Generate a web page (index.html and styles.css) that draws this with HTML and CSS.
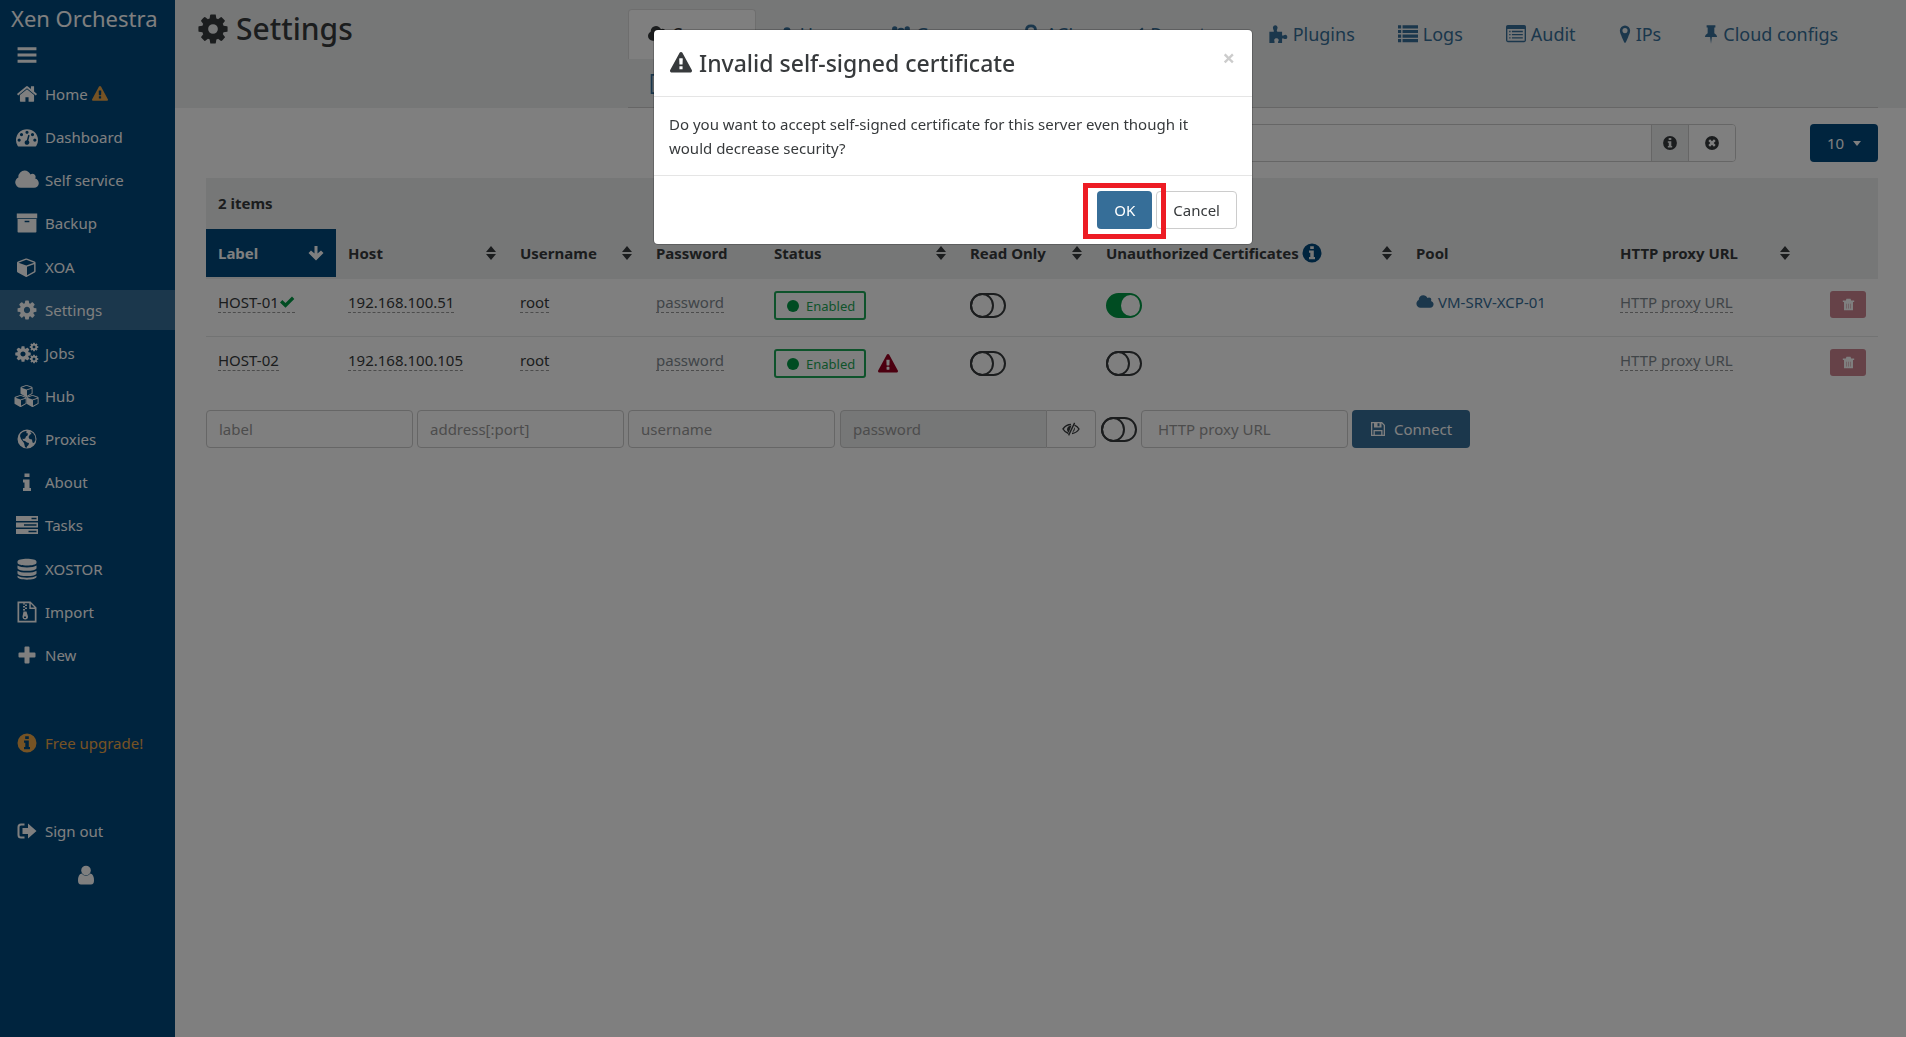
FILE: index.html
```html
<!DOCTYPE html>
<html lang="en">
<head>
<meta charset="utf-8">
<meta name="viewport" content="width=device-width, initial-scale=1">
<title>Xen Orchestra</title>
<link rel="stylesheet" href="styles.css">
</head>
<body>
<svg class="sprite" aria-hidden="true">
  <symbol id="bars" viewBox="0 0 1792 1792"><path d="M128 256h1536v256H128zM128 768h1536v256H128zM128 1280h1536v256H128z"/></symbol>
  <symbol id="home" viewBox="0 0 1792 1792"><path d="M1472 992v480q0 26-19 45t-45 19h-384v-384h-256v384h-384q-26 0-45-19t-19-45v-480q0-1 .5-3t.5-3l575-474 575 474q1 2 1 6zm223-69l-62 74q-8 9-21 11h-3q-13 0-21-7l-692-577-692 577q-12 8-24 7-13-2-21-11l-62-74q-8-10-7-23.500t11-21.500l719-599q32-26 76-26t76 26l244 204v-195q0-14 9-23t23-9h192q14 0 23 9t9 23v408l219 182q10 8 11 21.500t-7 23.500z"/></symbol>
  <symbol id="warn" viewBox="0 0 1792 1792"><path d="M1024 1375v-190q0-14-9.500-23.500t-22.500-9.500h-192q-13 0-22.500 9.500t-9.500 23.500v190q0 14 9.500 23.500t22.500 9.500h192q13 0 22.500-9.500t9.500-23.500zm-2-374l18-459q0-12-10-19-13-11-24-11h-220q-11 0-24 11-10 7-10 21l17 457q0 10 10 16.500t24 6.500h185q14 0 23.500-6.500t10.500-16.500zm-14-934l768 1408q35 63-2 126-17 29-46.500 46t-63.500 17h-1536q-34 0-63.500-17t-46.500-46q-37-63-2-126l768-1408q17-31 47-49t65-18 65 18 47 49z"/></symbol>
  <symbol id="dash" viewBox="0 0 1792 1792"><path d="M384 1152q0-53-37.500-90.500t-90.500-37.500-90.500 37.500-37.500 90.500 37.500 90.500 90.500 37.500 90.500-37.500 37.500-90.500zm192-448q0-53-37.500-90.500t-90.500-37.500-90.500 37.500-37.500 90.500 37.500 90.500 90.500 37.500 90.500-37.500 37.500-90.500zm428 481l101-382q6-26-7.500-48.500t-38.500-29.500-48 6.500-30 39.500l-101 382q-60 5-107 43.500t-63 98.500q-20 77 20 146t117 89 146-20 89-117q16-60-6-117t-72-91zm660-33q0-53-37.500-90.500t-90.500-37.500-90.500 37.500-37.500 90.500 37.500 90.500 90.500 37.500 90.500-37.500 37.500-90.500zm-640-640q0-53-37.500-90.500t-90.500-37.500-90.500 37.500-37.500 90.500 37.500 90.500 90.500 37.500 90.500-37.500 37.500-90.500zm448 192q0-53-37.500-90.500t-90.500-37.500-90.500 37.500-37.500 90.500 37.500 90.500 90.500 37.500 90.500-37.500 37.500-90.500zm320 448q0 261-141 483-19 29-54 29h-1402q-35 0-54-29-141-221-141-483 0-182 71-348t191-286 286-191 348-71 348 71 286 191 191 286 71 348z"/></symbol>
  <symbol id="cloud" viewBox="64 0 1920 1792"><path d="M1984 1152q0 159-112.500 271.500t-271.500 112.500h-1088q-185 0-316.500-131.500t-131.500-316.500q0-132 71-241.500t187-163.500q-2-28-2-43 0-212 150-362t362-150q158 0 286.500 88t187.500 230q70-62 166-62 106 0 181 75t75 181q0 75-41 138 129 30 213 134.500t84 239.500z"/></symbol>
  <symbol id="archive" viewBox="0 0 1792 1792"><path fill-rule="evenodd" d="M64 128h1664v384H64zM128 576h1536v1024q0 64-64 64H192q-64 0-64-64zM704 704v128h384V704z"/></symbol>
  <symbol id="cube" viewBox="0 0 1792 1792"><path d="M896 1629l640-349v-636l-640 233v752zm-64-865l698-254-698-254-698 254zm832-252v768q0 35-18 65t-49 47l-704 384q-28 16-61 16t-61-16l-704-384q-31-17-49-47t-18-65v-768q0-40 23-73t61-47l704-256q22-8 44-8t44 8l704 256q38 14 61 47t23 73z"/></symbol>
  <symbol id="cog" viewBox="0 0 1792 1792"><path d="M1152 896q0-106-75-181t-181-75-181 75-75 181 75 181 181 75 181-75 75-181zm512-109v222q0 12-8 23t-20 13l-185 28q-19 54-39 91 35 50 107 138 10 12 10 25t-9 23q-27 37-99 108t-94 71q-12 0-26-9l-138-108q-44 23-91 38-16 136-29 186-7 28-36 28h-222q-14 0-24.500-8.500t-11.500-21.500l-28-184q-49-16-90-37l-141 107q-10 9-25 9-14 0-25-11-126-114-165-168-7-10-7-23 0-12 8-23 15-21 51-66.500t54-70.500q-27-50-41-99l-183-27q-13-2-21-12.500t-8-23.500v-222q0-12 8-23t19-13l186-28q14-46 39-92-40-57-107-138-10-12-10-24 0-10 9-23 26-36 98.500-107.500t94.500-71.500q13 0 26 10l138 107q44-23 91-38 16-136 29-186 7-28 36-28h222q14 0 24.500 8.500t11.500 21.500l28 184q49 16 90 37l142-107q9-9 24-9 13 0 25 10 129 119 165 170 7 8 7 22 0 12-8 23-15 21-51 66.500t-54 70.500q26 50 41 98l183 28q13 2 21 12.500t8 23.500z"/></symbol>
  <symbol id="cogs" viewBox="0 0 24 22"><use href="#cog" x="-1" y="3" width="18" height="18"/><use href="#cog" x="14" y="0" width="10" height="10"/><use href="#cog" x="14" y="12" width="10" height="10"/></symbol>
  <symbol id="cubes" viewBox="0 0 26 22"><use href="#cube" x="6" y="-1" width="14" height="13"/><use href="#cube" x="0" y="9" width="14" height="13"/><use href="#cube" x="12" y="9" width="14" height="13"/></symbol>
  <symbol id="globe" viewBox="0 0 22 22"><path fill-rule="evenodd" d="M11 1.500a9.500 9.500 0 1 0 0 19 9.500 9.500 0 0 0 0-19zM4.500 6q2-2.500 5-3l1.500.8-1 1.200 2 .5-.5 2-1.500 1-.8 2-1.700.5-1-.5.5 2 2 .5 2 1.500 2 .5-.5 2-1.500 1.500-.5 1.500-1.500-1-1-4-1.500-2-1.500-2L4 8zM14 3.500l3 1.500 2 3 .5 4-1.500 3-1.500-.5-.5-3-2.500-.5-1-2 1.500-2.500 1.500-.5z"/></symbol>
  <symbol id="info" viewBox="0 0 22 22"><path d="M8.500 2.500h5V6h-5zM7 8.500h6.500V17H15v3H7v-3h1.500v-5.500H7z"/></symbol>
  <symbol id="tasks" viewBox="0 0 22 22"><path fill-rule="evenodd" d="M0 2h22v5H0zM0 8.500h22v5H0zM0 15h22v5H0zM15.500 3.800v1.400h5V3.800zM8 10.300v1.400h12.500v-1.400zM12.500 16.800v1.400h8v-1.400z"/></symbol>
  <symbol id="db" viewBox="0 0 22 22"><path d="M1.500 3.500C1.500-.3 20.500-.3 20.500 3.500v1.300C20.500 8.500 1.500 8.500 1.500 4.800zM1.500 7.500c3 2.500 16 2.500 19 0V10c0 3.800-19 3.800-19 0zM1.500 12.700c3 2.500 16 2.500 19 0v2.500c0 3.800-19 3.800-19 0zM1.500 17.800c3 2.500 16 2.500 19 0v1c0 3.800-19 3.800-19 0z"/></symbol>
  <symbol id="zip" viewBox="0 0 22 22"><path fill-rule="evenodd" d="M1.500.5h13l6 6v15h-19zM3.200 2.200v17.600h15.600V8h-5.500V2.200zM14.800 2.700v3.800h3.700zM7 2h2v1.500H7zM9 3.500h2V5H9zM7 5h2v1.500H7zM9 6.500h2V8H9zM7 8h2v1.500H7zM7.500 10.500h3l1.500 5c.6 4-6 4-5.500 0zM8 15.500v1.500h2v-1.500z"/></symbol>
  <symbol id="plus" viewBox="0 0 22 22"><path d="M8.500 3.500q0-1 1-1h3q1 0 1 1V8.500H18.500q1 0 1 1v3q0 1-1 1h-5v5q0 1-1 1h-3q-1 0-1-1v-5H3.500q-1 0-1-1v-3q0-1 1-1h5z"/></symbol>
  <symbol id="infoc" viewBox="0 0 22 22"><path fill-rule="evenodd" d="M11 1.500a9.500 9.500 0 1 0 0 19 9.500 9.500 0 0 0 0-19zM9.200 4.200v2.800h3.600V4.200zM8 8.600v2.200h1.300V15H8v2.200h6V15h-1.200V8.600z"/></symbol>
  <symbol id="xc" viewBox="0 0 22 22"><path fill-rule="evenodd" d="M11 1.500a9.500 9.500 0 1 0 0 19 9.500 9.500 0 0 0 0-19zM8.300 6L6 8.300 8.700 11 6 13.700 8.300 16l2.700-2.700 2.700 2.700 2.300-2.300-2.700-2.700L16 8.300 13.700 6 11 8.700z"/></symbol>
  <symbol id="out" viewBox="0 0 22 22"><path d="M8.500 3.500V5.500H5q-1.500 0-1.500 1.500v8q0 1.500 1.500 1.500h3.500v2H5q-3.500 0-3.500-3.500V7Q1.500 3.500 5 3.500zM6.500 8h5.500V3.500L20.500 11l-8.500 7.500V14H6.500z"/></symbol>
  <symbol id="user" viewBox="0 0 22 22"><circle cx="11" cy="6.500" r="4.800"/><path d="M6.500 9.500Q11 14 15.500 9.500q3.500 1 3.500 7 0 4-3 4H6q-3 0-3-4 0-6 3.500-7z"/></symbol>
  <symbol id="group" viewBox="0 0 24 22"><circle cx="4.500" cy="5" r="3.200"/><circle cx="19.500" cy="5" r="3.200"/><circle cx="12" cy="8" r="4.600"/><path d="M0 9h7v5H0zM17 9h7v5h-7zM5 13h14v8H5z"/></symbol>
  <symbol id="key" viewBox="0 0 22 22"><path fill="none" stroke="currentColor" stroke-width="3" d="M6 10V7q0-5 5-5t5 5v3"/><path d="M3 10h16v10H3z"/></symbol>
  <symbol id="plug" viewBox="0 0 22 22"><path d="M13 7l5-5 2 2-5 5zM17 11l4-3 1 2-4 4zM9 6l9 9q-4 6-10 3l-5 4-2-2 4-5Q3 9 9 6z"/></symbol>
  <symbol id="puzzle" viewBox="0 0 22 22"><path d="M1.500 8.500H6C7.500 8 5 5.500 5.500 3.500 6 .5 10 .5 10.500 3.500c.3 2-2 4 0 5h5v3.500c.5 1.800 2 0 3.500-.2 3 0 3 5 0 4.800-1.500 0-3-2-3.500 0V21h-4c-1.500-.8.500-2 .3-3.500-.4-2.500-4.600-2.500-5 0-.1 1.500 1.500 3-.3 3.500h-5z"/></symbol>
  <symbol id="list" viewBox="0 0 22 22"><path d="M0 1.500h3.500V5H0zM5 1.500h17V5H5zM0 6.500h3.500V10H0zM5 6.500h17V10H5zM0 11.500h3.500V15H0zM5 11.500h17V15H5zM0 16.500h3.500V20H0zM5 16.500h17V20H5z"/></symbol>
  <symbol id="audit" viewBox="0 0 22 22"><path fill-rule="evenodd" d="M2 1h18q2 0 2 2v15q0 2-2 2H2q-2 0-2-2V3q0-2 2-2zM1.500 5.500v13h19v-13zM3.500 7.500H5V9H3.500zM6.500 7.500h12V9h-12zM3.500 11H5v1.500H3.500zM6.500 11h12v1.500h-12zM3.500 14.500H5V16H3.500zM6.500 14.500h12V16h-12z"/></symbol>
  <symbol id="marker" viewBox="0 0 14 22"><path fill-rule="evenodd" d="M7 1a6 6 0 0 1 6 6c0 3-1.500 5-2.500 8L8 20.500q-1 1.500-2 0L3.500 15C2.500 12 1 10 1 7a6 6 0 0 1 6-6zm0 3a3 3 0 1 0 0 6 3 3 0 0 0 0-6z"/></symbol>
  <symbol id="pin" viewBox="0 0 16 22"><path d="M3 1h10v2.500h-1.200V10q3.200 1.500 3.200 4.500H9L8 22l-1-7.500H1q0-3 3.200-4.500V3.500H3z"/></symbol>
  <symbol id="file" viewBox="0 0 22 22"><path fill-rule="evenodd" d="M3 0h12l6 6v16H3zM5 2v18h14V8h-6V2z"/></symbol>
  <symbol id="down" viewBox="0 0 16 16"><path d="M6.500 1h3v7.500l3.500-3L15.500 8 8 15.500.5 8 3 5.500l3.500 3z"/></symbol>
  <symbol id="sort" viewBox="0 0 10 14"><path d="M5 0l5 6H0zM0 8h10l-5 6z"/></symbol>
  <symbol id="check" viewBox="0 0 16 16"><path d="M1 8.500L3.300 6l3.200 3L13 2.500 15.300 5 6.500 13.800z"/></symbol>
  <symbol id="eye" viewBox="0 0 18 16"><path fill="none" stroke="currentColor" stroke-width="1.400" d="M6.500 12.500Q3 11.500 1 8q3-4.500 8-4.500M12.500 4.200Q15.500 5.500 17 8q-2.500 4-7 4.500"/><path d="M12 1.500l1.200.7-6 12.500-1.200-.8zM9.500 4.500Q5 5 5 8.500q0 2 1.800 3zM12.800 6q.8 3.500-2.500 5.500z"/></symbol>
  <symbol id="save" viewBox="0 0 16 16"><path fill-rule="evenodd" d="M1 1h11l3 3v11H1zM2.300 2.300v11.400h1.200V9h9v4.700h1.200V4.500l-2.200-2.200V6.500H4V2.300zM7.500 2.300v3h2v-3zM4.800 10.300v3.400h6.400v-3.400z"/></symbol>
  <symbol id="trash" viewBox="0 0 16 16"><path d="M5.500 1h5l.8 2H15v1.800H1V3h3.700zM2.500 5h11v10h-11z"/><path d="M5.500 7v6M8 7v6M10.500 7v6" stroke="#cc8491" stroke-width=".6"/></symbol>
</svg>

<div class="app">
  <nav class="sidebar" aria-label="Main menu">
    <a class="brand" href="#">Xen Orchestra</a>
    <button class="burger" aria-label="Collapse menu"><svg class="ic22"><use href="#bars"/></svg></button>
    <ul class="menu">
      <li><a href="#"><span class="mi"><svg class="ic22"><use href="#home"/></svg></span>Home<svg class="ic16 orange"><use href="#warn"/></svg></a></li>
      <li><a href="#"><span class="mi"><svg class="ic22"><use href="#dash"/></svg></span>Dashboard</a></li>
      <li><a href="#"><span class="mi"><svg class="ic24"><use href="#cloud"/></svg></span>Self service</a></li>
      <li><a href="#"><span class="mi"><svg class="ic22"><use href="#archive"/></svg></span>Backup</a></li>
      <li><a href="#"><span class="mi"><svg class="ic20"><use href="#cube"/></svg></span>XOA</a></li>
      <li><a class="active" href="#"><span class="mi"><svg class="ic22"><use href="#cog"/></svg></span>Settings</a></li>
      <li><a href="#"><span class="mi"><svg class="ic24"><use href="#cogs"/></svg></span>Jobs</a></li>
      <li><a href="#"><span class="mi"><svg class="ic26"><use href="#cubes"/></svg></span>Hub</a></li>
      <li><a href="#"><span class="mi"><svg class="ic22"><use href="#globe"/></svg></span>Proxies</a></li>
      <li><a href="#"><span class="mi"><svg class="ic22"><use href="#info"/></svg></span>About</a></li>
      <li><a href="#"><span class="mi"><svg class="ic22"><use href="#tasks"/></svg></span>Tasks</a></li>
      <li><a href="#"><span class="mi"><svg class="ic22"><use href="#db"/></svg></span>XOSTOR</a></li>
      <li><a href="#"><span class="mi"><svg class="ic22"><use href="#zip"/></svg></span>Import</a></li>
      <li><a href="#"><span class="mi"><svg class="ic22"><use href="#plus"/></svg></span>New</a></li>
    </ul>
    <ul class="extra">
      <li><a class="orange" href="#"><span class="mi"><svg class="ic22"><use href="#infoc"/></svg></span>Free upgrade!</a></li>
      <li><a href="#"><span class="mi"><svg class="ic22"><use href="#out"/></svg></span>Sign out</a></li>
    </ul>
    <a class="account" href="#" aria-label="Account"><svg class="ic22"><use href="#user"/></svg></a>
  </nav>

  <div class="page">
    <header class="head">
      <h1><svg class="ic34"><use href="#cog"/></svg>Settings</h1>
      <nav class="tabs" aria-label="Settings sections">
        <a class="on" href="#"><svg class="ic20"><use href="#cloud"/></svg>Servers</a>
        <a href="#"><svg class="ic16"><use href="#user"/></svg>Users</a>
        <a href="#"><svg class="ic20"><use href="#group"/></svg>Groups</a>
        <a href="#"><svg class="ic20"><use href="#key"/></svg>ACLs</a>
        <a href="#"><svg class="ic16"><use href="#plug"/></svg>Remotes</a>
        <a href="#"><svg class="ic20"><use href="#puzzle"/></svg>Plugins</a>
        <a href="#"><svg class="ic20"><use href="#list"/></svg>Logs</a>
        <a href="#"><svg class="ic20"><use href="#audit"/></svg>Audit</a>
        <a href="#"><svg class="ic12"><use href="#marker"/></svg>IPs</a>
        <a href="#"><svg class="ic14"><use href="#pin"/></svg>Cloud configs</a>
        <a href="#" aria-label="Config"><svg class="ic20"><use href="#file"/></svg></a>
      </nav>
    </header>

    <main class="main">
      <div class="tools">
        <div class="filter">
          <input type="text" aria-label="Filter">
          <span class="addon"><svg class="ic16"><use href="#infoc"/></svg></span>
          <button class="clear" aria-label="Clear filter"><svg class="ic16"><use href="#xc"/></svg></button>
        </div>
        <button class="btn navy" aria-label="Items per page">10<span class="caret"></span></button>
      </div>

      <table>
        <colgroup><col class="c1"><col class="c2"><col class="c3"><col class="c4"><col class="c5"><col class="c6"><col class="c7"><col class="c8"><col class="c9"><col class="c10"></colgroup>
        <thead>
          <tr class="count"><th colspan="10">2 items</th></tr>
          <tr>
            <th class="sorted"><div>Label<svg class="ic16"><use href="#down"/></svg></div></th>
            <th><div>Host<svg class="sort"><use href="#sort"/></svg></div></th>
            <th><div>Username<svg class="sort"><use href="#sort"/></svg></div></th>
            <th><div>Password</div></th>
            <th><div>Status<svg class="sort"><use href="#sort"/></svg></div></th>
            <th><div>Read Only<svg class="sort"><use href="#sort"/></svg></div></th>
            <th><div><span class="cert">Unauthorized Certificates<svg class="ic22"><use href="#infoc"/></svg></span><svg class="sort"><use href="#sort"/></svg></div></th>
            <th><div>Pool</div></th>
            <th><div>HTTP proxy URL<svg class="sort"><use href="#sort"/></svg></div></th>
            <th></th>
          </tr>
        </thead>
        <tbody>
          <tr>
            <td><span class="edit">HOST-01<svg class="ic16 ok"><use href="#check"/></svg></span></td>
            <td><span class="edit">192.168.100.51</span></td>
            <td><span class="edit">root</span></td>
            <td><span class="edit muted">password</span></td>
            <td><div class="cell"><button class="state">Enabled</button></div></td>
            <td><div class="cell"><input class="toggle" type="checkbox" aria-label="Read only HOST-01"></div></td>
            <td><div class="cell"><input class="toggle" type="checkbox" checked aria-label="Unauthorized certificates HOST-01"></div></td>
            <td><a class="pool" href="#"><svg class="ic18"><use href="#cloud"/></svg>VM-SRV-XCP-01</a></td>
            <td><span class="edit muted">HTTP proxy URL</span></td>
            <td><div class="cell end"><button class="del" disabled aria-label="Remove HOST-01"><svg class="trash"><use href="#trash"/></svg></button></div></td>
          </tr>
          <tr>
            <td><span class="edit">HOST-02</span></td>
            <td><span class="edit">192.168.100.105</span></td>
            <td><span class="edit">root</span></td>
            <td><span class="edit muted">password</span></td>
            <td><div class="cell"><button class="state">Enabled</button><svg class="ic20 danger"><use href="#warn"/></svg></div></td>
            <td><div class="cell"><input class="toggle" type="checkbox" aria-label="Read only HOST-02"></div></td>
            <td><div class="cell"><input class="toggle" type="checkbox" aria-label="Unauthorized certificates HOST-02"></div></td>
            <td></td>
            <td><span class="edit muted">HTTP proxy URL</span></td>
            <td><div class="cell end"><button class="del" disabled aria-label="Remove HOST-02"><svg class="trash"><use href="#trash"/></svg></button></div></td>
          </tr>
        </tbody>
      </table>

      <form class="add">
        <input type="text" placeholder="label" aria-label="label">
        <input type="text" placeholder="address[:port]" aria-label="address and port">
        <input type="text" placeholder="username" aria-label="username">
        <div class="pw"><input type="password" placeholder="password" aria-label="password" disabled><button type="button" aria-label="Show password"><svg class="ic18"><use href="#eye"/></svg></button></div>
        <input class="toggle" type="checkbox" aria-label="Allow unauthorized certificates">
        <input class="proxy" type="text" placeholder="HTTP proxy URL" aria-label="HTTP proxy URL">
        <button type="button" class="btn blue connect"><svg class="ic16"><use href="#save"/></svg>Connect</button>
      </form>
    </main>
  </div>
</div>

<div class="backdrop">
  <div class="modal" role="dialog" aria-modal="true" aria-labelledby="modal-title">
    <div class="modal-head">
      <h2 id="modal-title"><svg class="ic24"><use href="#warn"/></svg>Invalid self-signed certificate</h2>
      <button class="close" aria-label="Close">×</button>
    </div>
    <p>Do you want to accept self-signed certificate for this server even though it would decrease security?</p>
    <div class="modal-foot">
      <span class="marked"><button class="btn blue">OK</button></span>
      <button class="btn plain">Cancel</button>
    </div>
  </div>
</div>
</body>
</html>
```
FILE: styles.css
```css
*, *::before, *::after { box-sizing: border-box; }
body {
  margin: 0;
  font: 15px/24px "Noto Sans", "Open Sans", sans-serif;
  color: #373a3c;
  background: #fff;
}
button, input { font: inherit; color: inherit; margin: 0; }
button { cursor: pointer; }
a { color: #366e98; text-decoration: none; }
ul { list-style: none; margin: 0; padding: 0; }
svg { fill: currentColor; flex: none; }
.sprite { position: absolute; width: 0; height: 0; }
.ic12 { width: 12px; height: 20px; }
.ic14 { width: 14px; height: 20px; }
.ic16 { width: 16px; height: 16px; }
.ic18 { width: 18px; height: 16px; }
.ic20 { width: 20px; height: 20px; }
.ic22 { width: 22px; height: 22px; }
.ic24 { width: 24px; height: 22px; }
.ic26 { width: 26px; height: 22px; }
.ic34 { width: 34px; height: 34px; }

.app { display: flex; min-height: 100vh; }

/* Sidebar */
.sidebar { width: 175px; flex: none; background: #00487c; color: #fff; }
.brand { display: block; padding: 0 11px; font-size: 22px; line-height: 36px; color: #fff; white-space: nowrap; }
.burger { display: block; margin: 8px 0 8px 16px; padding: 0; height: 22px; border: 0; background: none; color: #fff; }
.burger svg { display: block; }
.menu { display: flex; flex-direction: column; justify-content: space-between; height: 601px; }
.sidebar li a { display: flex; align-items: center; height: 40px; padding-left: 13px; color: #fff; }
.sidebar li a.active { background: #366e98; }
.mi { display: flex; justify-content: center; width: 28px; margin-right: 4px; }
.sidebar .orange, .sidebar li a.orange { color: #eca649; }
.sidebar svg.orange { margin-left: 4px; }
.extra { display: grid; gap: 48px; margin-top: 48px; }
.account { display: flex; justify-content: center; margin-top: 13px; padding-right: 3px; color: #fff; }

/* Page header */
.page { flex: 1; min-width: 0; }
.head { display: flex; justify-content: space-between; height: 108px; padding: 0 28px 0 21px; background: #eceeef; }
h1 { display: flex; align-items: center; gap: 6px; margin: 0; height: 57px; font-size: 30px; font-weight: 500; line-height: 36px; }
.tabs { display: flex; flex-wrap: wrap; align-content: flex-start; width: 1250px; padding-top: 9px; border-bottom: 1px solid #ccc; }
.tabs a { display: flex; align-items: center; gap: 5px; height: 50px; margin-right: 3px; padding: 0 19px 2px; border: 1px solid transparent; border-bottom: 0; font-size: 18px; white-space: nowrap; }
.tabs a.on { background: #fff; color: #373a3c; border-color: #ddd; border-radius: 4px 4px 0 0; }

.main { padding: 16px 28px 0 31px; }
.tools { display: flex; justify-content: flex-end; gap: 74px; margin-bottom: 16px; }
.filter { display: flex; width: 836px; height: 38px; border: 1px solid #ccc; border-radius: 4px; overflow: hidden; }
.filter input { flex: 1; min-width: 0; border: 0; }
.addon { display: flex; align-items: center; justify-content: center; width: 38px; background: #eceeef; border: solid #ccc; border-width: 0 1px; }
.clear { display: flex; align-items: center; justify-content: center; width: 46px; border: 0; background: #fff; }
.btn { display: flex; align-items: center; justify-content: center; height: 38px; padding: 0 16px; border: 1px solid transparent; border-radius: 4px; color: #fff; white-space: nowrap; }
.navy { width: 68px; gap: 9px; background: #00487c; }
.caret { border: 4px solid transparent; border-top: 5px solid #fff; border-bottom: 0; }
.blue { gap: 8px; background: #366e98; }
.connect { padding: 0 17px; }
.plain { background: #fff; border-color: #ccc; color: #373a3c; }

/* Servers table */
table { width: 100%; table-layout: fixed; border-spacing: 0; }
.c1 { width: 130px; } .c2 { width: 172px; } .c3 { width: 136px; } .c4 { width: 118px; } .c5 { width: 196px; }
.c6 { width: 136px; } .c7 { width: 310px; } .c8 { width: 204px; } .c9 { width: 194px; } .c10 { width: 76px; }
thead { background: #eceeef; }
th { padding: 0 0 2px; text-align: left; font-weight: 700; white-space: nowrap; }
th div { display: flex; align-items: center; justify-content: space-between; height: 48px; padding: 0 12px; }
.count th { height: 51px; padding: 0 12px 2px; }
.sorted div { background: #00487c; color: #fff; }
.sort { width: 10px; height: 14px; }
.cert { display: flex; align-items: center; gap: 2px; }
.cert svg { color: #00487c; }
td { height: 57px; padding: 11px 12px 0; vertical-align: top; white-space: nowrap; }
tr + tr td { height: 58px; border-top: 1px solid #e4e6e7; }
.edit { border-bottom: 1px dashed #999; }
.edit svg { vertical-align: -2px; }
.muted { color: #818a91; }
.ok { color: #009944; }
.cell { display: flex; align-items: center; height: 31px; gap: 12px; }
.end { height: 29px; justify-content: flex-end; }
.state { display: flex; align-items: center; gap: 7px; height: 29px; padding: 0 9px 0 11px; border: 2px solid #1da756; border-radius: 3px; background: #fff; color: #1da756; font-size: 13px; }
.state::before { content: ""; width: 12px; height: 12px; border-radius: 50%; background: #009944; }
.danger { color: #990020; }
.pool { display: flex; align-items: center; gap: 4px; }
.del { display: flex; align-items: center; justify-content: center; width: 36px; height: 27px; padding: 0; border: 0; border-radius: 3px; background: #cc8491; color: #fff; }
.trash { width: 13px; height: 15px; }

.toggle { appearance: none; position: relative; flex: none; width: 36px; height: 25px; border: 2px solid #373a3c; border-radius: 13px; background: #fff; }
.toggle::before { content: ""; position: absolute; top: -2px; left: -2px; width: 24px; height: 25px; border: 2px solid #373a3c; border-radius: 50%; }
.toggle:checked { background: #009944; border-color: #009944; }
.toggle:checked::before { top: 0; left: 13px; width: 19px; height: 21px; border: 0; background: #fff; }

/* New server form */
.add { display: flex; align-items: center; gap: 4px; margin-top: 16px; }
.add input:not(.toggle) { width: 207px; height: 38px; padding: 0 12px; border: 1px solid #ccc; border-radius: 4px; background: #fff; }
.add input::placeholder { color: #999; opacity: 1; }
.pw { display: flex; margin: 0 1px; }
.add .pw input { border-radius: 4px 0 0 4px; background: #eceeef; }
.add input.proxy:not(.toggle) { padding-left: 16px; }
.pw button { display: flex; align-items: center; justify-content: center; width: 49px; border: 1px solid #ccc; border-left: 0; border-radius: 0 4px 4px 0; background: #fff; }

/* Confirmation dialog */
.backdrop { position: fixed; inset: 0; padding-top: 30px; background: rgba(0, 0, 0, 0.5); }
.modal { width: 598px; margin: 0 auto; border-radius: 4px; background: #fff; box-shadow: 0 0 0 1px rgba(0, 0, 0, 0.2); }
.modal-head { display: flex; justify-content: space-between; height: 67px; padding: 15px; border-bottom: 1px solid #e5e5e5; }
h2 { display: flex; align-items: center; gap: 6px; margin: 0; height: 36px; font-size: 23px; font-weight: 500; }
.close { height: 24px; padding: 0 2px; border: 0; background: none; color: #ccc; font-size: 22px; font-weight: 700; line-height: 24px; }
.modal p { margin: 0; padding: 15px 50px 15px 15px; }
.modal-foot { display: flex; justify-content: flex-end; gap: 4px; padding: 15px; border-top: 1px solid #e5e5e5; }
.marked { position: relative; }
.marked::after { content: ""; position: absolute; inset: -8px -14px -10px; border: 5px solid #ed1c24; pointer-events: none; }
```
